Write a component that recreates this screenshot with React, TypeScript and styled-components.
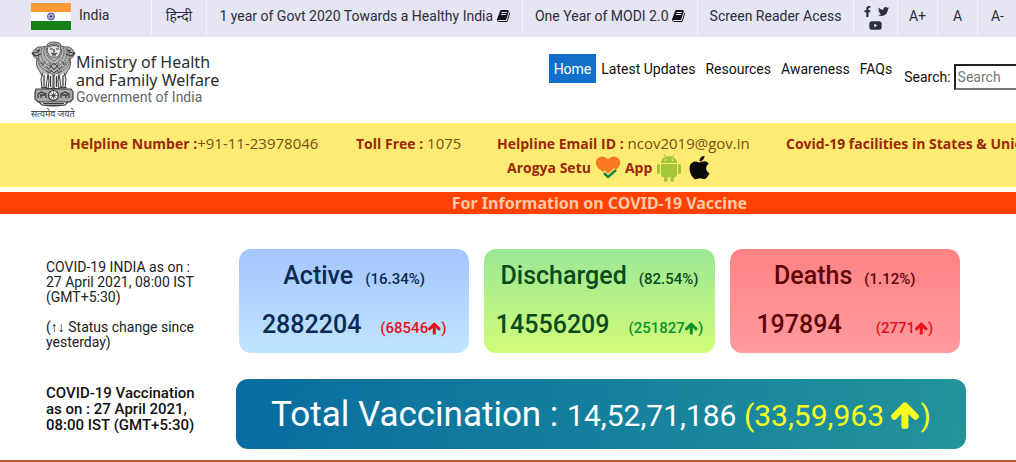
import React from "react";
import styled, { createGlobalStyle } from "styled-components";
import { FaApple, FaFacebookF, FaTwitter, FaYoutube } from "react-icons/fa";

const GlobalStyle = createGlobalStyle`
  *, *::before, *::after { box-sizing: border-box; }
  html, body { margin: 0; background: #fff; overflow-x: hidden; }
  body { font: 14px/16px Roboto, "Noto Sans", sans-serif; color: #111; }
  a { color: inherit; text-decoration: none; }
  p, h1, h2 { margin: 0; padding: 0; }
`;

const Page = styled.div`
  overflow: hidden;
`;

const TopBar = styled.nav`
  display: flex;
  height: 37px;
  padding-left: 31px;
  background: #e5e5f4;
  color: #2b2e3b;
  white-space: nowrap;
  border-bottom: 2px solid #e9e9f3;
`;

const TopCell = styled.div<{ $width: number }>`
  display: flex;
  flex: 0 0 ${(p) => p.$width}px;
  align-items: center;
  justify-content: center;
  gap: 2px;
  padding-bottom: 3px;
  border-right: 1px solid #f4f4fc;
`;

const CountryCell = styled(TopCell)`
  justify-content: flex-start;
  align-items: flex-start;
  gap: 8px;
  padding: 3px 0 0;

  span { padding-top: 4px; }
`;

const SocialCell = styled(TopCell)`
  flex-wrap: wrap;
  align-content: flex-start;
  gap: 2px 5px;
  padding: 6px 8px 0;

  a { display: flex; }
`;

const SizeButton = styled.button`
  border: 0;
  padding: 0;
  background: none;
  color: inherit;
  font: inherit;
`;

const BookIcon = styled.svg`
  vertical-align: -2px;
`;

const Header = styled.header`
  display: grid;
  grid-template-columns: 54% 1fr;
  height: 86px;
  white-space: nowrap;
`;

const Brand = styled.div`
  display: flex;
  padding: 4px 0 0 31px;
`;

const EmblemBox = styled.div`
  display: flex;
  flex-direction: column;
  width: 45px;
  font-size: 9px;
  line-height: 14px;
  color: #333;
`;

const BrandText = styled.div`
  padding-top: 12px;
  font: 16px/18px "Noto Sans", "Open Sans", sans-serif;
  color: #2c2c2c;

  small {
    display: block;
    font: 14px/16px Roboto, sans-serif;
    color: #666;
  }
`;

const MainNav = styled.nav`
  display: flex;
  align-items: flex-start;
  padding-top: 17px;
`;

const NavLink = styled.a<{ $active?: boolean }>`
  padding: 7px 5px 6px;
  background: ${(p) => (p.$active ? "#126fca" : "none")};
  color: ${(p) => (p.$active ? "#fff" : "#111")};
`;

const SearchForm = styled.form`
  display: flex;
  align-items: center;
  gap: 3px;
  padding: 10px 0 0 7px;

  input {
    width: 150px;
    height: 26px;
    padding: 0 2px;
    border: 2px inset #767676;
    border-radius: 0;
    background: #fff;
    font: inherit;
  }
  input::placeholder { color: #777; opacity: 1; }
`;

const HelpStrip = styled.section`
  display: flex;
  height: 64px;
  padding: 10px 0 0 70px;
  background: #fdeb74;
  color: #7a5010;
  font: 15px/20px "Open Sans", "Noto Sans", sans-serif;
  white-space: nowrap;
`;

const HelpItem = styled.div<{ $width: number }>`
  flex: 0 0 ${(p) => p.$width}px;

  strong { font-size: 14px; color: #9a2808; }
`;

const AppRow = styled.div`
  display: flex;
  align-items: center;
  gap: 4px;
  height: 27px;
  padding-left: 10px;
`;

const Banner = styled.a`
  display: block;
  margin-top: 5px;
  padding-left: 18%;
  background: #ff4203;
  color: #ffc9a8;
  font: bold 16px/22px "Noto Sans", "Open Sans", sans-serif;
  text-align: center;
`;

const Row = styled.section`
  display: grid;
  grid-template-columns: 190px minmax(0, 1fr);
  padding: 0 50px 0 46px;
`;

const Note = styled.p<{ $strong?: boolean }>`
  width: 160px;
  padding-top: ${(p) => (p.$strong ? 6 : 11)}px;
  font-size: ${(p) => (p.$strong ? 15 : 14)}px;
  font-weight: ${(p) => (p.$strong ? 500 : 400)};
  line-height: ${(p) => (p.$strong ? 16 : 15)}px;
  color: ${(p) => (p.$strong ? "#111" : "#222")};
`;

const Cards = styled.div`
  display: grid;
  grid-template-columns: repeat(3, 1fr);
  gap: 15px;
  padding: 0 6px 0 3px;
`;

const Card = styled.article<{ $from: string; $to: string; $ink: string }>`
  height: 104px;
  padding-top: 12px;
  border-radius: 12px;
  background: linear-gradient(${(p) => p.$from}, ${(p) => p.$to});
  color: ${(p) => p.$ink};
  white-space: nowrap;
`;

const CardLine = styled.div<{ $gap: number }>`
  display: flex;
  justify-content: center;
  align-items: baseline;
  gap: ${(p) => p.$gap}px;
  height: 49px;
  font-size: 25px;
  font-weight: 500;
  line-height: 30px;

  h2 { font: inherit; }
  small { font-size: 15px; }
`;

const Change = styled.small<{ $color: string }>`
  color: ${(p) => p.$color};
  svg { vertical-align: -2px; }
`;

const Total = styled.h1`
  display: flex;
  align-items: baseline;
  justify-content: center;
  height: 70px;
  padding-top: 16px;
  border-radius: 12px;
  background: linear-gradient(100deg, #086ca0, #22949a);
  color: #fff;
  font-size: 35px;
  font-weight: 400;
  line-height: 40px;
  white-space: pre;

  span { font-size: 30px; }
  em { font-size: 30px; font-style: normal; color: #fbff1c; }
  svg { vertical-align: -4px; }
`;

const Rows = styled.main`
  display: grid;
  gap: 26px;
  padding: 35px 0 11px;
  border-bottom: 2px solid #c2563a;
`;

const Flag = () => (
  <svg width="40" height="27" viewBox="0 0 40 27" role="img" aria-label="Flag of India">
    <rect width="40" height="9" fill="#ff9a36" />
    <rect y="9" width="40" height="9" fill="#fff" />
    <rect y="18" width="40" height="9" fill="#138018" />
    <circle cx="20" cy="13.5" r="3.5" fill="#c3c3e6" stroke="#4c4c94" />
    <path d="M20 10v7M16.500 13.500h7M17.500 11l5 5M22.500 11l-5 5" stroke="#5c5ca2" strokeWidth=".5" />
    <circle cx="20" cy="13.500" r="1" fill="#33337e" />
  </svg>
);

const Book = () => (
  <BookIcon width="13" height="14" viewBox="0 0 1664 1792" fill="#15161c" aria-hidden="true">
    <path d="M1639 478q40 57 18 129l-275 906q-19 64-76.500 107.500t-122.500 43.500h-923q-77 0-148.500-53.500t-99.500-131.500q-24-67-2-127 0-4 3-27t4-37q1-8-3-21.500t-3-19.500q2-11 8-21t16.500-23.500 16.500-23.500q23-38 45-91.500t30-91.500q3-10 .5-30t-.5-28q3-11 17-28t17-23q21-36 42-92t25-90q1-9-2.500-32t.5-28q4-13 22-30.500t22-22.500q19-26 42.500-84.500t27.500-96.500q1-8-3-25.500t-2-26.500q2-8 9-18t18-23 17-21q8-12 16.500-30.500t15-35 16-36 19.500-32 26.500-23.500 36-11.500 47.500 5.500l-1 3q38-9 51-9h761q74 0 114 56t18 130l-274 906q-36 119-71.500 153.500t-128.500 34.500h-869q-27 0-38 15-11 16-1 43 24 70 144 70h923q29 0 56-15.500t35-41.500l300-987q7-22 5-57 38 15 59 43zm-1064 2q-4 13 2 22.500t20 9.500h608q13 0 25.500-9.500t16.500-22.500l21-64q4-13-2-22.500t-20-9.500h-608q-13 0-25.500 9.500t-16.500 22.500zm-83 256q-4 13 2 22.500t20 9.500h608q13 0 25.500-9.500t16.500-22.500l21-64q4-13-2-22.500t-20-9.500h-608q-13 0-25.500 9.500t-16.500 22.500z" />
  </BookIcon>
);

const ArrowUp = ({ size }: { size: number }) => (
  <svg width={size} height={size} viewBox="64 128 1600 1600" fill="currentColor" aria-label="increase" role="img">
    <path d="M1611 971q0 51-37 90l-75 75q-38 38-91 38-54 0-90-38l-294-293v704q0 52-37.500 84.500t-90.500 32.500h-128q-53 0-90.500-32.500t-37.500-84.500v-704l-294 293q-36 38-90 38t-90-38l-75-75q-38-38-38-90 0-53 38-91l651-651q35-37 90-37 54 0 91 37l651 651q37 39 37 91z" />
  </svg>
);

const Emblem = () => (
  <svg width="45" height="66" viewBox="0 0 45 66" fill="none" stroke="#3b3b3b" strokeWidth=".8" role="img" aria-label="State Emblem of India">
    <path d="M16 5q0-4 7-4t7 4l4 1q4-1 7 2l3 4-2 4-3 2q2 7-3 13l-2 4H11l-2-4q-5-6-3-13l-3-2-2-4 3-4q3-3 7-2z" fill="#b4b4b4" />
    <path d="M17 5q6-4 12 0l1 5-3 6h-8l-3-6z" fill="#e2e2e2" />
    <path d="M18 6q5-3 10 0M19 8h3M25 8h3M23 8v4M20 12q3 2 6 0M21 14h4" strokeWidth="1.200" />
    <path d="M16 7q-2 5 2 10l5 3 5-3q4-5 2-10M14 6q-3 7 2 13l7 5 7-5q5-6 2-13M11 7q-3 8 3 15l9 6 9-6q6-7 3-15M8 10q-2 8 4 15l11 7 11-7q6-7 4-15M7 17q0 7 5 11l11 6 11-6q5-4 5-11" strokeDasharray="1.800 .7" />
    <path d="M2 12l5-1 2-3M1 12l4 3 5-2M43 12l-5-1-2-3M44 12l-4 3-5-2M5 9l3 1M40 9l-3 1" strokeWidth="1.200" />
    <path d="M18 22l2 3 3-3 3 3 2-3M15 25l3 3 2-3 3 4 3-4 2 3 3-3M15 30l3 2 2-3 3 3 3-3 2 3 3-2M10 21l2 3 2-4M31 20l2 4 2-3" />
    <path d="M12 32l-2 6 1 9h4l1-8 1-5M17 33l1 7-1 8h5V34M28 33l-1 7 1 8h-5V34M33 32l2 6-1 9h-4l-1-8-1-5" fill="#ededed" strokeWidth="1" />
    <path d="M13 34v11M19.500 35v11M25.500 35v11M32 34v11M10 47l4-1 3 2 5-1 5 1 4-2 5 1" strokeWidth="1.200" />
    <path d="M5 48h35l2 3v7l-3 3H7l-3-3v-7z" fill="#a9a9a9" strokeWidth="1.200" />
    <circle cx="22.500" cy="54.500" r="5" fill="#ececec" strokeWidth="1.200" />
    <circle cx="22.500" cy="54.500" r="1.500" fill="#777" />
    <path d="M22.500 50v9M18 54.500h9M19.500 51.500l6 6M25.500 51.500l-6 6" strokeWidth=".5" />
    <path d="M7 57v-4l3-2 5 2v4M9 54h5M10 54v3M30 57v-4l4-2 4 2v4M31 54h6M35 54v3" strokeWidth="1.300" />
    <path d="M8 61l3 3h23l3-3M11 64q11 2 23 0M12 62.500h21" strokeWidth="1.200" />
  </svg>
);

const HeartCheck = () => (
  <svg width="26" height="24" viewBox="0 0 26 24" aria-hidden="true">
    <path d="M13 20L3 12Q-1 7 2 3q5-5 11 0 6-5 11 0 3 4-1 9z" fill="#fb7a21" />
    <path d="M8 16l5 5 8-7" fill="none" stroke="#fdeb74" strokeWidth="5" />
    <path d="M9 17l4 4 8-7" fill="none" stroke="#138a3a" strokeWidth="2.500" />
  </svg>
);

const Android = () => (
  <svg width="26" height="28" viewBox="0 0 26 28" fill="#a4c639" aria-hidden="true">
    <path d="M5 9q0-4 4-6L7.500.5l.7-.4 1.600 2.500q3-1.200 6.400 0L17.800.1l.7.4L17 3q4 2 4 6zM5 10h16v11q0 2-2 2h-1v3q0 2-1.750 2T14.500 26v-3h-3v3q0 2-1.750 2T8 26v-3H7q-2 0-2-2z" />
    <rect x="1" y="10" width="3" height="10" rx="1.500" />
    <rect x="22" y="10" width="3" height="10" rx="1.500" />
    <circle cx="9.500" cy="6" r=".9" fill="#fdeb74" />
    <circle cx="16.500" cy="6" r=".9" fill="#fdeb74" />
  </svg>
);

const stats = [
  { name: "Active", share: "16.34%", count: "2882204", change: "68546", gap: 19, from: "#a5c5fe", to: "#bfe6fe", ink: "#0c2a52", color: "#e8101c" },
  { name: "Discharged", share: "82.54%", count: "14556209", change: "251827", gap: 19, from: "#9be796", to: "#d2fc78", ink: "#0b4a1c", color: "#0b932f" },
  { name: "Deaths", share: "1.12%", count: "197894", change: "2771", gap: 34, from: "#ff8283", to: "#ff9b9f", ink: "#5e0508", color: "#e8101c" },
];

const App = () => (
  <Page>
    <GlobalStyle />
    <TopBar aria-label="Utilities">
      <CountryCell $width={121}><Flag /><span>India</span></CountryCell>
      <TopCell $width={55}><a href="#hi" lang="hi">हिन्दी</a></TopCell>
      <TopCell $width={316}><a href="#year">1 year of Govt 2020 Towards a Healthy India <Book /></a></TopCell>
      <TopCell $width={175}><a href="#modi">One Year of MODI 2.0 <Book /></a></TopCell>
      <TopCell $width={156}><a href="#reader">Screen Reader Acess</a></TopCell>
      <SocialCell $width={44}>
        <a href="#facebook" aria-label="Facebook"><FaFacebookF size={11} /></a>
        <a href="#twitter" aria-label="Twitter"><FaTwitter size={11} /></a>
        <a href="#youtube" aria-label="YouTube"><FaYoutube size={13} /></a>
      </SocialCell>
      <TopCell $width={40}><SizeButton>A+</SizeButton></TopCell>
      <TopCell $width={40}><SizeButton>A</SizeButton></TopCell>
      <TopCell $width={40}><SizeButton>A-</SizeButton></TopCell>
    </TopBar>

    <Header>
      <Brand>
        <EmblemBox><Emblem /><span lang="hi">सत्यमेव जयते</span></EmblemBox>
        <BrandText>Ministry of Health<br />and Family Welfare<small>Government of India</small></BrandText>
      </Brand>
      <MainNav aria-label="Main">
        <NavLink href="#home" $active>Home</NavLink>
        <NavLink href="#updates">Latest Updates</NavLink>
        <NavLink href="#resources">Resources</NavLink>
        <NavLink href="#awareness">Awareness</NavLink>
        <NavLink href="#faqs">FAQs</NavLink>
        <SearchForm>
          <label htmlFor="search">Search:</label>
          <input id="search" type="text" placeholder="Search" />
        </SearchForm>
      </MainNav>
    </Header>

    <HelpStrip>
      <HelpItem $width={286}><strong>Helpline Number :</strong>+91-11-23978046</HelpItem>
      <HelpItem $width={141}><strong>Toll Free :</strong> 1075</HelpItem>
      <HelpItem $width={289}>
        <strong>Helpline Email ID :</strong> ncov2019@gov.in
        <AppRow><strong>Arogya Setu</strong><HeartCheck /><strong>App</strong><Android /><FaApple size={27} color="#0a0a0a" /></AppRow>
      </HelpItem>
      <HelpItem $width={400}><strong>Covid-19 facilities in States &amp; Union Territories</strong></HelpItem>
    </HelpStrip>

    <Banner href="#vaccine">For Information on COVID-19 Vaccine</Banner>

    <Rows>
      <Row>
        <Note>
          COVID-19 INDIA as on :<br />27 April 2021, 08:00 IST<br />(GMT+5:30)<br /><br />(↑↓ Status change since<br />yesterday)
        </Note>
        <Cards>
          {stats.map((s) => (
            <Card key={s.name} $from={s.from} $to={s.to} $ink={s.ink}>
              <CardLine $gap={12}><h2>{s.name}</h2><small>({s.share})</small></CardLine>
              <CardLine $gap={s.gap}>
                <span>{s.count}</span>
                <Change $color={s.color}>({s.change}<ArrowUp size={13} />)</Change>
              </CardLine>
            </Card>
          ))}
        </Cards>
      </Row>
      <Row>
        <Note $strong>COVID-19 Vaccination<br />as on : 27 April 2021,<br />08:00 IST (GMT+5:30)</Note>
        <Total>Total Vaccination : <span>14,52,71,186 </span><em>(33,59,963 <ArrowUp size={29} />)</em></Total>
      </Row>
    </Rows>
  </Page>
);

export default App;
